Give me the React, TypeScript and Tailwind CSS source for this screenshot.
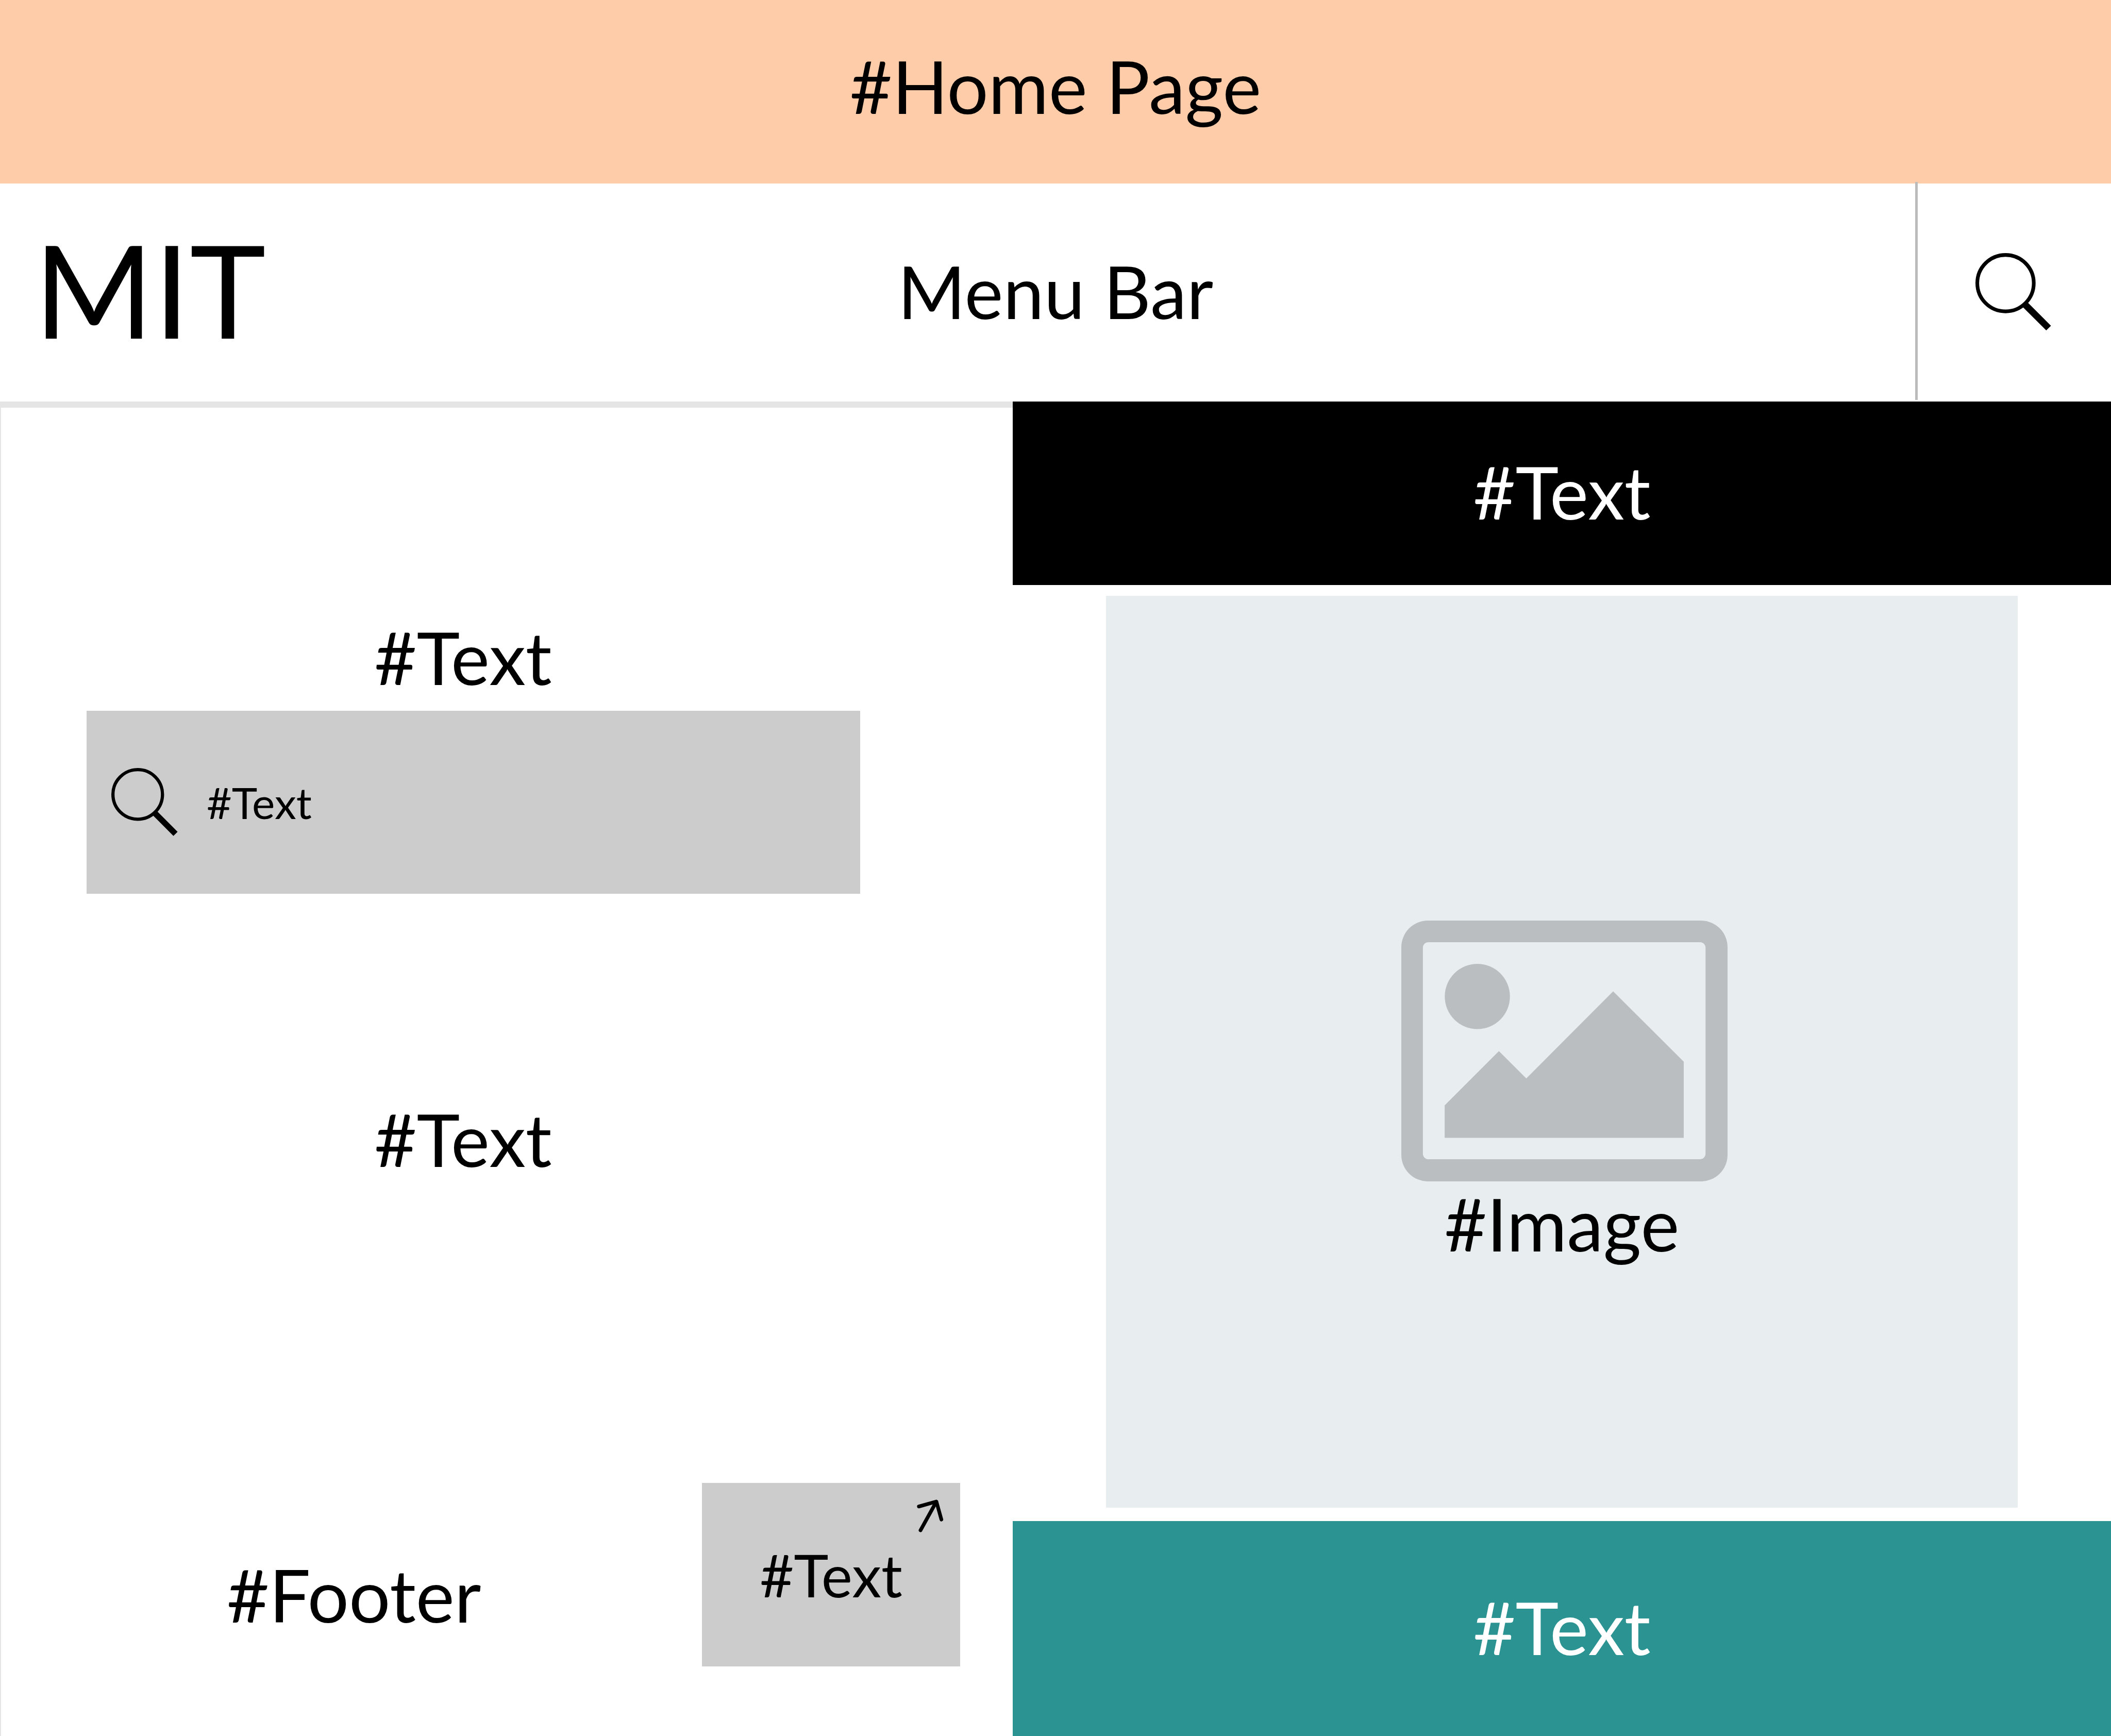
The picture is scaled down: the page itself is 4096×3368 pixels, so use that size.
type IconProps = { className?: string };

function SearchIcon({ className }: IconProps) {
  return (
    <svg viewBox="0 0 165 169" className={className} fill="none" stroke="currentColor" aria-hidden="true">
      <circle cx="65.5" cy="65.5" r="61.5" strokeWidth="8" />
      <path d="M108 112L159.3 163.3" strokeWidth="14.6" />
    </svg>
  );
}

function ArrowIcon({ className }: IconProps) {
  return (
    <svg
      viewBox="478 68 59 73"
      className={className}
      fill="none"
      stroke="currentColor"
      strokeWidth="8"
      strokeLinecap="round"
      strokeLinejoin="round"
      aria-hidden="true"
    >
      <path d="M482.4 83.6L521 72.8L532 112.3M521 72.8L486 136" />
    </svg>
  );
}

function PictureIcon({ className }: IconProps) {
  return (
    <svg viewBox="54 46.6 711 568.4" className={className} fill="currentColor" aria-hidden="true">
      <path
        fillRule="evenodd"
        d="M112 46.6H707A58 58 0 0 1 765 104.6V557A58 58 0 0 1 707 615H112A58 58 0 0 1 54 557V104.6A58 58 0 0 1 112 46.6ZM113 93.7A12 12 0 0 0 101 105.7V554.7A12 12 0 0 0 113 566.7H705A12 12 0 0 0 717 554.7V105.7A12 12 0 0 0 705 93.7Z"
      />
      <circle cx="219.7" cy="212" r="71" />
      <path d="M148.5 449.4L266.7 331L326.4 390.5L515.7 200.9L669.5 354V520H148.5Z" />
    </svg>
  );
}

export default function App() {
  return (
    <div className="flex min-h-screen flex-col bg-white font-['Lato',sans-serif] text-[142px] leading-[138px] text-black">
      <header>
        <div className="flex h-[356px] items-center justify-center bg-[#ffccaa] pb-6">
          <h1>#Home Page</h1>
        </div>
        <nav aria-label="Main" className="grid h-[423px] grid-cols-[1fr_auto_1fr] items-center">
          <a href="#home" className="justify-self-start pb-4 pl-[66px] text-[250px]">
            MIT
          </a>
          <span className="pb-2">Menu Bar</span>
          <button
            type="button"
            aria-label="Search"
            className="-mt-[3px] mb-[3px] flex w-[380px] items-center justify-center self-stretch justify-self-end border-l-[5px] border-[#bbbbbb] pt-1 pr-1"
          >
            <SearchIcon className="w-[147px]" />
          </button>
        </nav>
      </header>

      <div className="grid flex-1 grid-cols-[1965fr_2131fr]">
        <main className="flex flex-col border-t-[12px] border-l-2 border-[#e5e5e5] pt-[414px] pb-[135px]">
          <section className="mr-[296px] ml-[166px] text-center">
            <h2 className="pr-10">#Text</h2>
            <label className="mt-9 flex h-[355px] items-center gap-14 bg-[#cccccc] px-12">
              <SearchIcon className="w-[129px] shrink-0" />
              <input
                type="search"
                aria-label="Search text"
                placeholder="#Text"
                className="h-24 min-w-0 flex-1 bg-transparent text-[84px] outline-none placeholder:text-black placeholder:opacity-100"
              />
            </label>
            <p className="mt-[406px] pr-10">#Text</p>
          </section>

          <footer className="mt-auto flex items-end justify-between pr-[102px] pl-[438px]">
            <p className="mb-[71px]">#Footer</p>
            <a
              href="#text"
              className="relative flex h-[356px] w-[501px] items-center justify-center bg-[#cccccc] text-[114px]"
            >
              #Text
              <ArrowIcon className="absolute top-8 right-8 w-[52px]" />
            </a>
          </footer>
        </main>

        <aside className="flex flex-col">
          <div className="flex h-[356px] items-center justify-center bg-black pb-2 text-white">#Text</div>
          <figure className="mx-[181px] mt-[21px] mb-[26px] flex aspect-square flex-col items-center gap-3 bg-[#e8eef0] pt-[630px]">
            <PictureIcon className="ml-[10px] w-[633px] text-[#babec1]" />
            <figcaption>#Image</figcaption>
          </figure>
          <div className="flex flex-1 items-center justify-center bg-[#2b9392] pb-2 text-white">#Text</div>
        </aside>
      </div>
    </div>
  );
}
